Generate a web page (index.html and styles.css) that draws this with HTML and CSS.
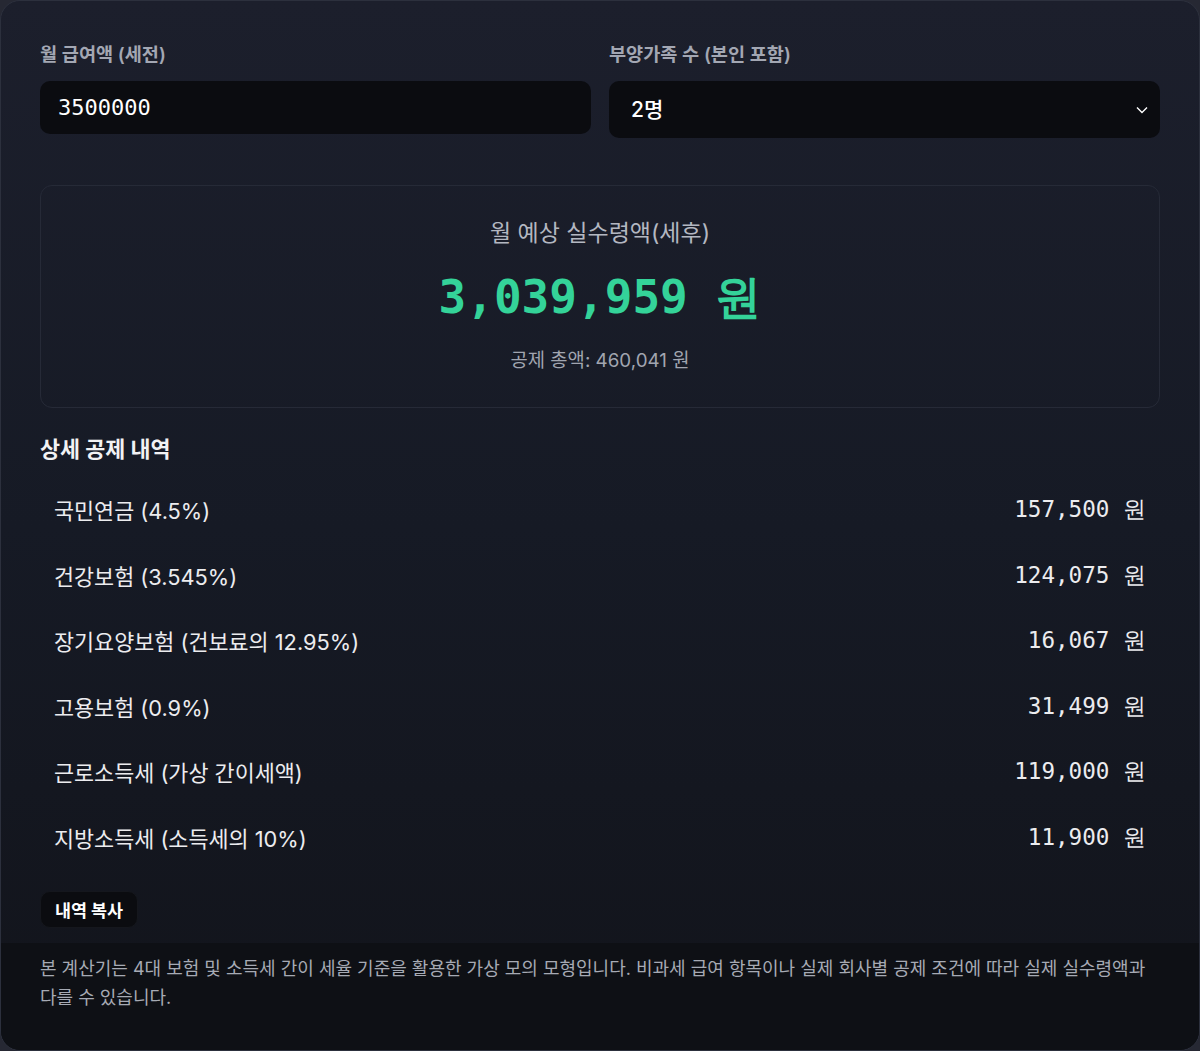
FILE: index.html
```html
<!DOCTYPE html>
<html lang="ko">
<head>
    <meta charset="UTF-8">
    <meta name="viewport" content="width=device-width, initial-scale=1.0">
    <title>월급 실수령액 계산기</title>
<link rel="stylesheet" href="styles.css">
</head>
<body>
    <div class="calc">
        <div class="calc-body">
            <!-- Inputs -->
            <div class="fields">
                <div class="field">
                    <label for="salary">월 급여액 (세전)</label>
                    <input type="text" id="salary" class="text-input" value="3500000">
                </div>
                <div class="field">
                    <label for="family">부양가족 수 (본인 포함)</label>
                    <div class="select-wrap">
                        <select id="family" class="select-input">
                            <option>1명</option>
                            <option selected>2명</option>
                            <option>3명</option>
                            <option>4명</option>
                        </select>
                        <svg class="chevron" viewBox="0 0 12 8" width="12" height="8">
                            <path d="M1 1.5l5 5 5-5" fill="none" stroke="#fff" stroke-width="1.4"/>
                        </svg>
                    </div>
                </div>
            </div>

            <!-- Result -->
            <div class="result">
                <p class="result-title">월 예상 실수령액(세후)</p>
                <p class="result-amount">3,039,959 원</p>
                <p class="result-sub">공제 총액: 460,041 원</p>
            </div>

            <!-- Breakdown -->
            <h2 class="section-title">상세 공제 내역</h2>
            <ul class="rows">
                <li class="row"><span>국민연금 (4.5%)</span><span class="num">157,500 원</span></li>
                <li class="row"><span>건강보험 (3.545%)</span><span class="num">124,075 원</span></li>
                <li class="row"><span>장기요양보험 (건보료의 12.95%)</span><span class="num">16,067 원</span></li>
                <li class="row"><span>고용보험 (0.9%)</span><span class="num">31,499 원</span></li>
                <li class="row"><span>근로소득세 (가상 간이세액)</span><span class="num">119,000 원</span></li>
                <li class="row"><span>지방소득세 (소득세의 10%)</span><span class="num">11,900 원</span></li>
            </ul>

            <button type="button" class="copy-btn">내역 복사</button>
        </div>

        <div class="calc-note">
            본 계산기는 4대 보험 및 소득세 간이 세율 기준을 활용한 가상 모의 모형입니다. 비과세 급여 항목이나 실제 회사별 공제 조건에 따라 실제 실수령액과 다를 수 있습니다.
        </div>
    </div>
</body>
</html>
```

FILE: styles.css
```css
* {
    box-sizing: border-box;
    margin: 0;
    padding: 0;
}

body {
    font-family: "Inter", "Noto Sans CJK KR", sans-serif;
    background-color: #262833;
    color: #ececef;
    word-break: keep-all;
}

.calc {
    width: 1200px;
    border: 1px solid #2c303d;
    border-radius: 20px;
    overflow: hidden;
    background: linear-gradient(180deg, #1c1f2c 0%, #161a25 50%, #12141b 100%);
}

.calc-body {
    padding: 40px 39px 15px;
}

.fields {
    display: grid;
    grid-template-columns: 1fr 1fr;
    gap: 18px;
    align-items: start;
}

.field label {
    display: block;
    font-size: 18.6px;
    font-weight: 600;
    line-height: 26px;
    color: #a3a7b3;
    margin-bottom: 14px;
}

.text-input,
.select-input {
    width: 100%;
    border: none;
    outline: none;
    border-radius: 10px;
    background-color: #0b0c10;
    color: #fff;
}

.text-input {
    height: 53px;
    padding: 0 18px;
    font-family: "DejaVu Sans Mono", monospace;
    font-size: 22px;
}

.select-wrap {
    position: relative;
}

.select-input {
    appearance: none;
    -webkit-appearance: none;
    height: 57px;
    padding: 0 22px;
    font-family: "Inter", "Noto Sans CJK KR", sans-serif;
    font-size: 21px;
    font-weight: 500;
}

.chevron {
    position: absolute;
    right: 12px;
    top: 25px;
}

.result {
    margin-top: 47px;
    height: 223px;
    border: 1px solid #262a37;
    border-radius: 12px;
    text-align: center;
    padding-top: 32px;
}

.result-title {
    font-size: 23px;
    line-height: 30px;
    color: #b3b7c1;
}

.result-amount {
    margin-top: 19px;
    font-family: "DejaVu Sans Mono", monospace;
    font-size: 46px;
    font-weight: bold;
    line-height: 60px;
    color: #34d399;
}

.result-sub {
    margin-top: 22px;
    font-size: 18.8px;
    line-height: 24px;
    color: #a1a5b0;
}

.section-title {
    margin-top: 27px;
    font-size: 21.8px;
    font-weight: 700;
    line-height: 28px;
    color: #f2f2f4;
}

.rows {
    list-style: none;
    margin-top: 14px;
}

.row {
    display: flex;
    justify-content: space-between;
    align-items: center;
    height: 65.5px;
    padding: 0 14px;
    font-size: 21.8px;
    color: #ececef;
}

.row .num {
    font-family: "DejaVu Sans Mono", monospace;
    font-size: 22.6px;
}

.copy-btn {
    margin-top: 21px;
    height: 37px;
    padding: 0 14px;
    border: 1px solid #15171d;
    border-radius: 10px;
    background-color: #0b0c10;
    color: #fff;
    font-family: "Inter", "Noto Sans CJK KR", sans-serif;
    font-size: 17.4px;
    font-weight: 700;
    cursor: pointer;
}

.calc-note {
    background-color: #0e1015;
    padding: 11px 40px 38px 39px;
    font-size: 18px;
    line-height: 29px;
    color: #a6aab4;
}
```
